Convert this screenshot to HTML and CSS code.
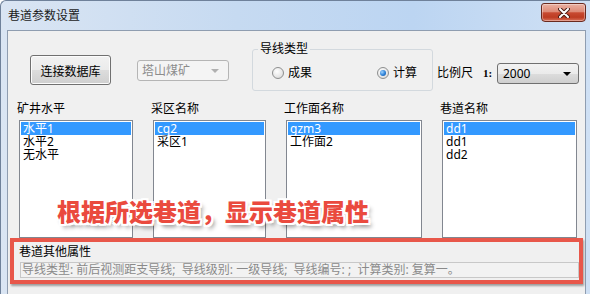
FILE: index.html
```html
<!DOCTYPE html>
<html lang="zh-CN">
<head>
    <meta charset="UTF-8">
    <title>巷道参数设置</title>
    <link rel="stylesheet" href="styles.css">
</head>
<body>
    <div class="window">
        <div class="titlebar">
            <span class="title">巷道参数设置</span>
            <span class="close">
                <svg width="12" height="10" viewBox="0 0 12 10">
                    <path d="M2 1 L10 9 M10 1 L2 9" stroke="#4a1c14" stroke-width="4" stroke-linecap="round"/>
                    <path d="M2 1 L10 9 M10 1 L2 9" stroke="#fff" stroke-width="2" stroke-linecap="round"/>
                </svg>
            </span>
        </div>
        <div class="client">
            <div class="toprow">
                <button class="btn">连接数据库</button>
                <div class="combo off"><span>塔山煤矿</span><i class="arrow"></i></div>
                <fieldset class="group">
                    <legend>导线类型</legend>
                    <div class="opts">
                        <label class="opt first"><span class="radio"></span>成果</label>
                        <label class="opt"><span class="radio on"></span>计算</label>
                    </div>
                </fieldset>
                <span class="scale-label">比例尺</span>
                <span class="ratio">1:</span>
                <div class="combo scale"><span>2000</span><i class="arrow"></i></div>
            </div>

            <div class="lists">
                <div class="col">
                    <div class="cap">矿井水平</div>
                    <ul class="listbox">
                        <li class="sel">水平1</li>
                        <li>水平2</li>
                        <li>无水平</li>
                    </ul>
                </div>
                <div class="col">
                    <div class="cap">采区名称</div>
                    <ul class="listbox">
                        <li class="sel">cq2</li>
                        <li>采区1</li>
                    </ul>
                </div>
                <div class="col">
                    <div class="cap">工作面名称</div>
                    <ul class="listbox">
                        <li class="sel">gzm3</li>
                        <li>工作面2</li>
                    </ul>
                </div>
                <div class="col">
                    <div class="cap">巷道名称</div>
                    <ul class="listbox">
                        <li class="sel">dd1</li>
                        <li>dd1</li>
                        <li>dd2</li>
                    </ul>
                </div>
                <div class="banner">根据所选巷道，显示巷道属性</div>
            </div>

            <div class="props">
                <div class="cap">巷道其他属性</div>
                <div class="field">导线类型: 前后视测距支导线;&nbsp; 导线级别: 一级导线;&nbsp; 导线编号: ;&nbsp; 计算类别: 复算一。</div>
            </div>
        </div>
    </div>
</body>
</html>
```

FILE: styles.css
```css
*{
    margin: 0;
    padding: 0;
    box-sizing: border-box;
    list-style: none;
}
body{
    width: 590px;
    height: 294px;
    overflow: hidden;
    font-family: "Noto Sans", "Noto Sans CJK SC", sans-serif;
    font-size: 12px;
    color: #000;
}
.window{
    width: 590px;
    height: 294px;
    display: flex;
    flex-direction: column;
    border-left: 1px solid #6f819a;
    border-top: 1px solid #6f819a;
    border-radius: 6px 0 0 0;
    background: linear-gradient(90deg, #dae5f3 0%, #c6daf1 40%, #bcd5f2 70%, #cfe0f4 100%);
}
.titlebar{
    height: 29px;
    display: flex;
    align-items: flex-start;
    justify-content: space-between;
}
.title{
    margin: 7px 0 0 7px;
    line-height: 16px;
    font-size: 12px;
    color: #1b1b1b;
}
.close{
    width: 45px;
    height: 19px;
    margin: 2px 4px 0 0;
    display: flex;
    align-items: center;
    justify-content: center;
    border: 1px solid #6a2a1f;
    border-radius: 3px 3px 4px 4px;
    background: linear-gradient(#eab1a3 0%, #de8b77 45%, #c84a31 52%, #bd3c22 78%, #d9715a 100%);
    box-shadow: inset 0 0 0 1px rgba(255,255,255,.35);
}
.client{
    flex: 1;
    margin: 0 4px 0 6px;
    border: 1px solid #8f9db0;
    border-bottom: none;
    background: #f0f0f0;
    display: flex;
    flex-direction: column;
}

/* top controls */
.toprow{
    display: flex;
    align-items: flex-start;
    height: 60px;
}
.btn{
    margin: 24px 0 0 22px;
    width: 81px;
    height: 30px;
    border: 1px solid #707070;
    border-radius: 3px;
    background: linear-gradient(#f2f2f2 0%, #ebebeb 50%, #dddddd 51%, #cfcfcf 100%);
    box-shadow: inset 0 0 0 1px #fcfcfc;
    font-family: "Noto Sans CJK SC", sans-serif;
    font-size: 12px;
    color: #000;
}
.combo{
    position: relative;
    height: 21px;
    border: 1px solid #707070;
    border-radius: 3px;
    padding-left: 4px;
    line-height: 19px;
    background: linear-gradient(#f2f2f2 0%, #ebebeb 50%, #dddddd 51%, #cfcfcf 100%);
}
.combo.off{
    margin: 29px 0 0 26px;
    width: 92px;
    border-color: #b5b5b5;
    background: #f4f4f4;
    color: #8d8d8d;
}
.combo.scale{
    margin: 32px 0 0 0;
    width: 82px;
    padding-left: 5px;
}
.arrow{
    position: absolute;
    right: 7px;
    top: 8px;
    border-left: 4px solid transparent;
    border-right: 4px solid transparent;
    border-top: 4px solid #000;
}
.off .arrow{
    border-top-color: #b0b0b0;
    top: 8px;
    right: 9px;
}
.group{
    margin: 10px 0 0 23px;
    width: 181px;
    padding: 8px 12px 9px 5px;
    border: 1px solid #d3d9de;
    border-radius: 3px;
}
.group legend{
    padding: 0 2px;
    line-height: 16px;
}
.opts{
    display: flex;
    margin-left: 14px;
}
.opt{
    display: flex;
    align-items: center;
    gap: 4px;
    line-height: 16px;
}
.opt.first{
    width: 105px;
}
.radio{
    width: 12px;
    height: 12px;
    border-radius: 50%;
    border: 1px solid #8e8f8f;
    background: radial-gradient(circle at 40% 35%, #ffffff 0%, #e6e6e6 60%, #cfcfcf 100%);
    display: flex;
    align-items: center;
    justify-content: center;
}
.radio.on::after{
    content: "";
    width: 6px;
    height: 6px;
    border-radius: 50%;
    background: radial-gradient(circle at 35% 35%, #9fd3ff 0%, #2a7fd6 55%, #174f96 100%);
}
.scale-label{
    margin: 34px 0 0 4px;
    width: 46px;
    line-height: 16px;
}
.ratio{
    margin-top: 35px;
    width: 14px;
    line-height: 14px;
    font-family: "Liberation Serif", serif;
    font-size: 11px;
    font-weight: bold;
}

/* four list columns */
.lists{
    position: relative;
    display: grid;
    grid-template-columns: 114px 113px 136px 135px;
    column-gap: 20px;
    padding-left: 11px;
    margin-top: 10px;
}
.cap{
    line-height: 16px;
    margin-left: -2px;
}
.col .cap{
    margin-bottom: 3px;
}
.listbox{
    height: 118px;
    border: 1px solid #828790;
    background: #fff;
    padding: 1px;
}
.listbox li{
    line-height: 13px;
    padding-left: 2px;
    white-space: nowrap;
}
.listbox li.sel{
    background: #3399ff;
    color: #fff;
}
.banner{
    position: absolute;
    left: 49px;
    top: 95px;
    line-height: 30px;
    font-family: "Noto Sans CJK SC", sans-serif;
    font-size: 24px;
    font-weight: 900;
    color: #ea4a3e;
    text-shadow:
        2px 0 0 #fff, -2px 0 0 #fff, 0 2px 0 #fff, 0 -2px 0 #fff,
        1px 1px 0 #fff, -1px -1px 0 #fff, 1px -1px 0 #fff, -1px 1px 0 #fff,
        2px 2px 0 #fff, -2px 2px 0 #fff, 2px -2px 0 #fff, -2px -2px 0 #fff,
        3px 4px 4px rgba(0,0,0,.45);
}

/* property box */
.props{
    margin: 0 2px 0 2px;
    border: 4px solid #e8574a;
    padding: 2px 0 2px 5px;
    box-shadow: 1px 2px 2px rgba(0,0,0,.35);
}
.props .cap{
    margin-left: 0;
}
.field{
    margin: 2px 0 0 1px;
    height: 16px;
    border: 1px solid #c8c8c8;
    background: #f2f2f2;
    padding-left: 1px;
    line-height: 14px;
    color: #8a8a8a;
    white-space: nowrap;
    overflow: hidden;
}
```
